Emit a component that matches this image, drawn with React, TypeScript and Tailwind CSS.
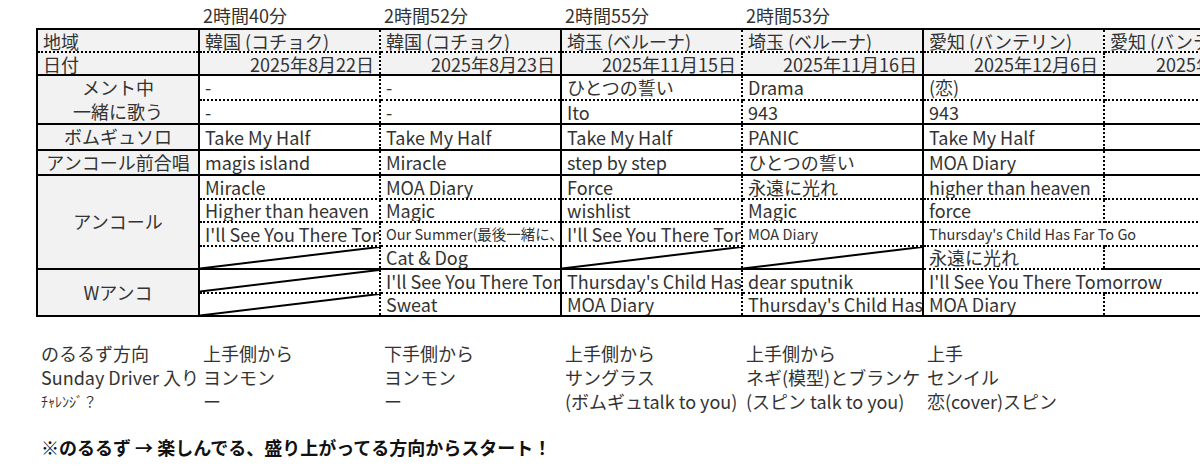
import type { ReactNode } from "react";

type Cell = { t?: string; sm?: boolean; diag?: boolean; spill?: boolean };

const D: Cell = { diag: true };
const c = (t: string): Cell => ({ t });

// right border of every column: solid between venues, dotted inside a pair
const RIGHT = [
  "[border-right:2px_solid_#000]",
  "[border-right:2px_dotted_#000]",
  "[border-right:2px_solid_#000]",
  "[border-right:2px_dotted_#000]",
  "[border-right:2px_solid_#000]",
  "[border-right:2px_dotted_#000]",
  "",
];
const BOTTOM = {
  s: "[border-bottom:2px_solid_#000]",
  d: "[border-bottom:2px_dotted_#000]",
};

const times = ["2時間40分", "2時間52分", "2時間55分", "2時間53分", "", ""];
const places = [
  "韓国 (コチョク)",
  "韓国 (コチョク)",
  "埼玉 (ベルーナ)",
  "埼玉 (ベルーナ)",
  "愛知 (バンテリン)",
  "愛知 (バンテリン)",
];
const dates = [
  "2025年8月22日",
  "2025年8月23日",
  "2025年11月15日",
  "2025年11月16日",
  "2025年12月6日",
  "2025年12月7日",
];

const ment = ["-", "-", "ひとつの誓い", "Drama", "(恋)", ""].map(c);
const issho = ["-", "-", "Ito", "943", "943", ""].map(c);
const solo = ["Take My Half", "Take My Half", "Take My Half", "PANIC", "Take My Half", ""].map(c);
const mae = ["magis island", "Miracle", "step by step", "ひとつの誓い", "MOA Diary", ""].map(c);
const enc1 = ["Miracle", "MOA Diary", "Force", "永遠に光れ", "higher than heaven", ""].map(c);
const enc2 = ["Higher than heaven", "Magic", "wishlist", "Magic", "force", ""].map(c);
const enc3: Cell[] = [
  c("I'll See You There Tomorrow"),
  { t: "Our Summer(最後一緒に、踊る)", sm: true },
  c("I'll See You There Tomorrow"),
  { t: "MOA Diary", sm: true },
  { t: "Thursday's Child Has Far To Go", sm: true, spill: true },
  c(""),
];
const enc4: Cell[] = [D, c("Cat & Dog"), D, D, c("永遠に光れ"), c("")];
const w1: Cell[] = [
  D,
  c("I'll See You There Tomorrow"),
  c("Thursday's Child Has Far To Go"),
  c("dear sputnik"),
  { t: "I'll See You There Tomorrow", spill: true },
  c(""),
];
const w2: Cell[] = [
  D,
  c("Sweat"),
  c("MOA Diary"),
  c("Thursday's Child Has Far To Go"),
  c("MOA Diary"),
  c(""),
];

function DataCell({ cell, col, bottom }: { cell: Cell; col: number; bottom: "s" | "d" }) {
  const right = cell.spill ? "" : RIGHT[col + 1];
  return (
    <td
      className={`h-[23.5px] py-0 px-[5px] whitespace-nowrap align-middle bg-white leading-[20px] ${
        cell.sm ? "text-[14.5px]" : "text-[18px]"
      } ${cell.spill ? "overflow-visible" : "overflow-hidden"} ${cell.diag ? "relative" : ""} ${right} ${
        BOTTOM[bottom]
      }`}
    >
      {cell.diag && (
        <svg className="absolute inset-0 w-full h-full" preserveAspectRatio="none" viewBox="0 0 100 100">
          <line x1="0" y1="100" x2="100" y2="0" stroke="#000" strokeWidth="2" vectorEffect="non-scaling-stroke" />
        </svg>
      )}
      {cell.t}
    </td>
  );
}

function Row({ cells, bottom, label, last }: { cells: Cell[]; bottom: "s" | "d"; label?: ReactNode; last?: "d" }) {
  return (
    <tr className="h-[23.5px]">
      {label}
      {cells.map((cell, i) => (
        <DataCell key={i} cell={cell} col={i} bottom={i === 4 && last ? last : bottom} />
      ))}
    </tr>
  );
}

const labelCls =
  "bg-[#f2f2f2] text-center text-[18px] leading-[23.5px] py-0 px-[5px] whitespace-nowrap [border-left:2px_solid_#000] [border-right:2px_solid_#000] [border-bottom:2px_solid_#000]";

const note = [
  ["のるるず方向", "上手側から", "下手側から", "上手側から", "上手側から", "上手"],
  ["Sunday Driver 入り", "ヨンモン", "ヨンモン", "サングラス", "ネギ(模型)とブランケット", "センイル"],
  ["ﾁｬﾚﾝｼﾞ？", "ー", "ー", "(ボムギュtalk to you)", "(スピン talk to you)", "恋(cover)スピン"],
];

const colW = ["w-[162px]", "w-[181px]", "w-[181px]", "w-[181px]", "w-[181px]", "w-[181px]", "w-[181px]"];

export default function App() {
  return (
    <div className="w-[1200px] h-[471px] overflow-hidden bg-white text-[#333] [font-family:'Noto_Sans_CJK_JP','Noto_Sans',sans-serif]">
      <div className="pl-[36px]">
        {/* 公演時間 */}
        <div className="flex h-[28px] items-end">
          <div className="w-[162px] shrink-0" />
          {times.map((t, i) => (
            <div key={i} className="w-[181px] shrink-0 px-[5px] text-[18px] leading-[26px] whitespace-nowrap">
              {t}
            </div>
          ))}
        </div>

        <table className="table-fixed border-collapse w-[1248px] [border-top:2px_solid_#000]">
          <colgroup>
            {colW.map((w, i) => (
              <col key={i} className={w} />
            ))}
          </colgroup>
          <tbody>
            <tr className="h-[23px]">
              <td className={`bg-[#f2f2f2] text-left text-[18px] leading-[20px] py-0 px-[5px] [border-left:2px_solid_#000] [border-right:2px_solid_#000] ${BOTTOM.d}`}>
                地域
              </td>
              {places.map((p, i) => (
                <td
                  key={i}
                  className={`bg-[#f2f2f2] text-[18px] leading-[20px] py-0 px-[5px] whitespace-nowrap overflow-hidden ${RIGHT[i + 1]} ${BOTTOM.d}`}
                >
                  {p}
                </td>
              ))}
            </tr>
            <tr className="h-[23px]">
              <td className={`bg-[#f2f2f2] text-left text-[18px] leading-[20px] py-0 px-[5px] [border-left:2px_solid_#000] [border-right:2px_solid_#000] ${BOTTOM.s}`}>
                日付
              </td>
              {dates.map((d, i) => (
                <td
                  key={i}
                  className={`bg-[#f2f2f2] text-right text-[18px] leading-[20px] py-0 px-[5px] whitespace-nowrap overflow-hidden ${RIGHT[i + 1]} ${BOTTOM.s}`}
                >
                  {d}
                </td>
              ))}
            </tr>

            <Row
              cells={ment}
              bottom="d"
              label={
                <td rowSpan={2} className={labelCls}>
                  <div>メント中</div>
                  <div>一緒に歌う</div>
                </td>
              }
            />
            <Row cells={issho} bottom="s" />
            <Row cells={solo} bottom="s" label={<td className={labelCls}>ボムギュソロ</td>} />
            <Row cells={mae} bottom="s" label={<td className={labelCls}>アンコール前合唱</td>} />
            <Row
              cells={enc1}
              bottom="d"
              label={
                <td rowSpan={4} className={labelCls}>
                  アンコール
                </td>
              }
            />
            <Row cells={enc2} bottom="d" />
            <Row cells={enc3} bottom="d" />
            <Row cells={enc4} bottom="s" last="d" />
            <Row
              cells={w1}
              bottom="d"
              label={
                <td rowSpan={2} className={labelCls}>
                  Wアンコ
                </td>
              }
            />
            <Row cells={w2} bottom="s" />
          </tbody>
        </table>

        {/* メモ */}
        <div className="mt-[24px]">
          {note.map((row, r) => (
            <div key={r} className="flex h-[24px] items-center">
              {row.map((t, i) => (
                <div
                  key={i}
                  className={`${colW[i]} shrink-0 px-[5px] whitespace-nowrap overflow-hidden ${
                    r === 2 && i === 0 ? "text-[14px]" : "text-[18px]"
                  } leading-[24px]`}
                >
                  {t}
                </div>
              ))}
            </div>
          ))}
        </div>

        <div className="mt-[22px] h-[24px] px-[5px] text-[18px] leading-[24px] font-bold text-[#111] whitespace-nowrap">
          ※のるるず → 楽しんでる、盛り上がってる方向からスタート！
        </div>
      </div>
    </div>
  );
}
